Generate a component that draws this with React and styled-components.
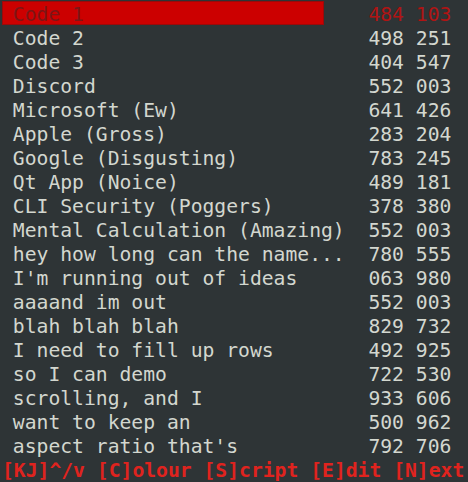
import React from "react";
import styled, { createGlobalStyle } from "styled-components";

const GlobalStyle = createGlobalStyle`
  html, body {
    margin: 0;
    padding: 0;
    background: #2e3436;
  }
`;

const Terminal = styled.div`
  width: 468px;
  height: 482px;
  box-sizing: border-box;
  padding: 1px 0 0 1px;
  background: #2e3436;
  color: #d3d7cf;
  font-family: "DejaVu Sans Mono", monospace;
  font-size: 19.7px;
  white-space: pre;
  overflow: hidden;
  display: flex;
  flex-direction: column;
`;

const Row = styled.div`
  display: flex;
  height: 24px;
  line-height: 20px;
`;

const Name = styled.div`
  width: calc(27ch + 2px);
  box-sizing: border-box;
  padding: 4px 0 0 calc(1ch - 1px);
  margin-left: 1px;
  background: ${(p) => (p.$active ? "#cc0000" : "transparent")};
  color: ${(p) => (p.$active ? "#7c1616" : "inherit")};
  box-shadow: ${(p) => (p.$active ? "inset 0 0 0 1px #9a0a0a" : "none")};
`;

const Code = styled.div`
  width: 11ch;
  margin-left: -3px;
  padding-top: 4px;
  text-align: right;
  color: ${(p) => (p.$active ? "#b01414" : "inherit")};
`;

const Footer = styled.div`
  color: #e0231e;
  font-weight: bold;
  height: 24px;
  line-height: 20px;
  padding: 4px 0 0 1px;
  box-sizing: border-box;
`;

const entries = [
  ["Code 1", "484 103"],
  ["Code 2", "498 251"],
  ["Code 3", "404 547"],
  ["Discord", "552 003"],
  ["Microsoft (Ew)", "641 426"],
  ["Apple (Gross)", "283 204"],
  ["Google (Disgusting)", "783 245"],
  ["Qt App (Noice)", "489 181"],
  ["CLI Security (Poggers)", "378 380"],
  ["Mental Calculation (Amazing)", "552 003"],
  ["hey how long can the name...", "780 555"],
  ["I'm running out of ideas", "063 980"],
  ["aaaand im out", "552 003"],
  ["blah blah blah", "829 732"],
  ["I need to fill up rows", "492 925"],
  ["so I can demo", "722 530"],
  ["scrolling, and I", "933 606"],
  ["want to keep an", "500 962"],
  ["aspect ratio that's", "792 706"],
];

export default function App() {
  return (
    <>
      <GlobalStyle />
      <Terminal>
        {entries.map(([name, code], i) => (
          <Row key={name}>
            <Name $active={i === 0}>{name}</Name>
            <Code $active={i === 0}>{code}</Code>
          </Row>
        ))}
        <Footer>[KJ]^/v [C]olour [S]cript [E]dit [N]ext</Footer>
      </Terminal>
    </>
  );
}
